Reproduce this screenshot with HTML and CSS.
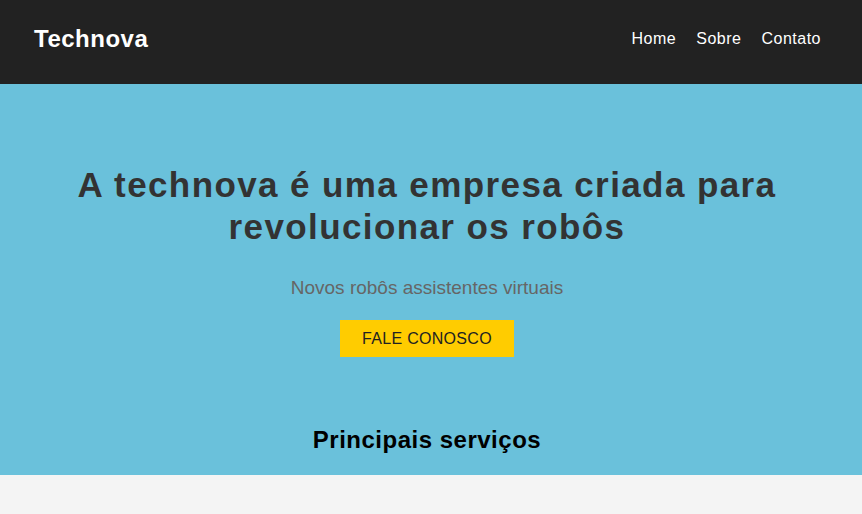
FILE: index.html
```html
<!DOCTYPE html>
<html lang="pt-BR">
<head>
<meta charset="utf-8">
<title>Technova</title>
<link rel="stylesheet" href="styles.css">
</head>
<body>
<header class="topbar">
  <div class="logo">Technova</div>
  <nav class="nav">
    <a href="#">Home</a>
    <a href="#">Sobre</a>
    <a href="#">Contato</a>
  </nav>
</header>
<section class="hero">
  <h1 class="hero-title">A technova é uma empresa criada para revolucionar os robôs</h1>
  <p class="hero-sub">Novos robôs assistentes virtuais</p>
  <a class="btn" href="#">FALE CONOSCO</a>
  <h2 class="section-title">Principais serviços</h2>
</section>
<section class="services"></section>
</body>
</html>
```
FILE: styles.css
```css
* { box-sizing: border-box; }
html, body { margin: 0; padding: 0; }
body {
  font-family: "Liberation Sans", Arial, sans-serif;
  background: #f4f4f4;
}
.topbar {
  height: 84px;
  background: #222;
  display: flex;
  align-items: center;
  justify-content: space-between;
  padding: 0 41px 6px 34px;
}
.logo {
  color: #fff;
  font-weight: bold;
  font-size: 24px;
  letter-spacing: 0.5px;
}
.nav {
  display: flex;
  gap: 20px;
}
.nav a {
  color: #fff;
  text-decoration: none;
  font-size: 16px;
  letter-spacing: 0.5px;
}
.hero {
  background: #6ac1db;
  height: 391px;
  display: flex;
  flex-direction: column;
  align-items: center;
  padding: 80px 8px 0 0;
  text-align: center;
}
.hero-title {
  margin: 0;
  max-width: 800px;
  font-size: 35px;
  line-height: 42px;
  color: #333;
  font-weight: bold;
  letter-spacing: 1.4px;
}
.hero-sub {
  margin: 29px 0 0;
  font-size: 19px;
  color: #666;
}
.btn {
  display: block;
  margin-top: 21px;
  width: 174px;
  height: 37px;
  line-height: 37px;
  background: #ffcc00;
  color: #222;
  text-decoration: none;
  font-size: 16px;
  letter-spacing: 0.3px;
}
.section-title {
  margin: 69px 0 0;
  font-size: 24px;
  color: #000;
  letter-spacing: 0.5px;
}
.services {
  height: 39px;
}
```
